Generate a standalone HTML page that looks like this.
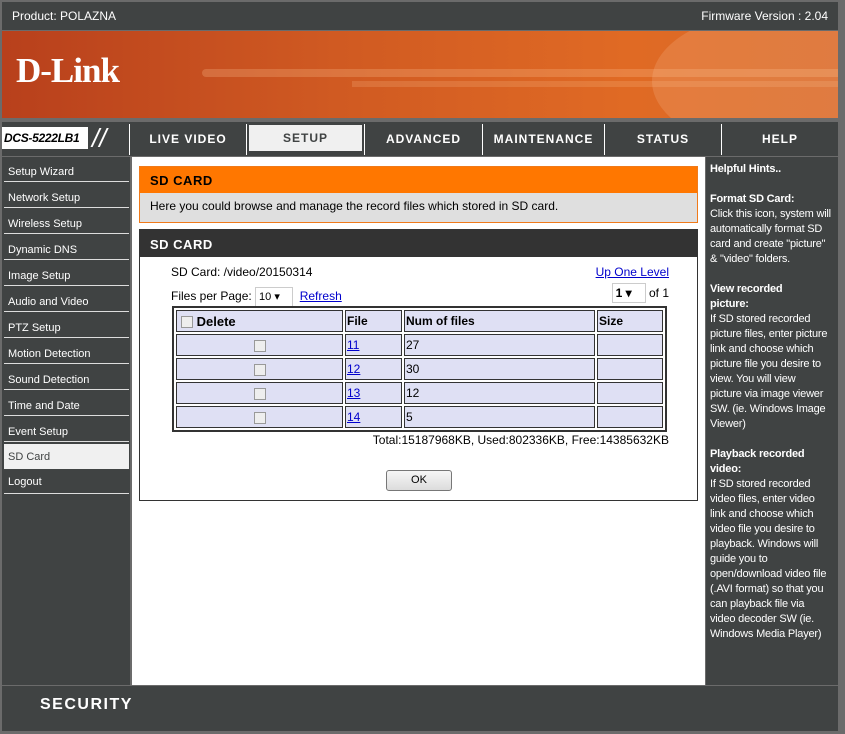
<!DOCTYPE html>
<html><head><meta charset="utf-8"><style>
*{margin:0;padding:0;box-sizing:border-box}
body{width:845px;height:734px;background:#6b6b6b;position:relative;overflow:hidden;font-family:"Liberation Sans",sans-serif;font-size:12px;color:#000}
.a{position:absolute}
.top{left:2px;top:2px;width:836px;height:28px;background:#404343;color:#fff;font-size:12px}
.banner{left:2px;top:31px;width:836px;height:87px;background:linear-gradient(90deg,#b8401c 0%,#d05a22 40%,#e06a24 75%,#d8682a 100%);overflow:hidden}
.nav{left:2px;top:122px;width:836px;height:34px;background:#404343}
.nav div.it{position:absolute;top:2px;height:31px;border-left:1px solid #fff;color:#fff;font-weight:bold;font-size:12px;letter-spacing:1px;text-align:center;line-height:31px}
.side{left:2px;top:157px;width:128px;height:528px;background:#404343}
.side div{position:absolute;left:2px;width:125px;height:25px;border-bottom:1px solid #ddd;color:#fff;font-size:11px;padding-left:4px;line-height:30px}
.main{left:132px;top:157px;width:573px;height:528px;background:#fff}
.hint{left:706px;top:157px;width:132px;height:528px;background:#404343;color:#fff;font-size:11px;line-height:15px;padding:5px 0 0 4px;letter-spacing:-0.2px;white-space:nowrap;overflow:hidden}
.foot{left:2px;top:686px;width:836px;height:45px;background:#404343}
table{border-collapse:separate;border-spacing:2px;background:#fff;border:2px solid #333}
td{background:#dfe0f4;border:1px solid #333;height:22px;font-size:12px;padding-left:1px}
a{color:#00c;text-decoration:underline}
.cb{display:inline-block;width:12px;height:12px;border:1px solid #999;background:#eee;vertical-align:middle}
.sel{display:inline-block;border:1px solid #ccc;height:20px;line-height:18px;padding:0 3px;font-size:11px;background:#fff}
</style></head><body>
<div class="a top"><span class="a" style="left:10px;top:7px">Product: POLAZNA</span><span class="a" style="right:10px;top:7px">Firmware Version : 2.04</span></div>
<div class="a banner">
<div class="a" style="left:200px;top:38px;width:700px;height:8px;background:rgba(255,200,150,.25);border-radius:4px"></div>
<div class="a" style="left:350px;top:50px;width:600px;height:6px;background:rgba(255,200,150,.2)"></div>
<div class="a" style="left:650px;top:-20px;width:250px;height:140px;border-radius:50%;background:rgba(255,210,170,.18)"></div>
<span class="a" style="left:14px;top:20px;color:#fff;font-family:'Liberation Serif',serif;font-weight:bold;font-size:35px;letter-spacing:-1px">D-Link</span></div>
<div class="a nav">
<div class="a" style="left:0;top:5px;width:86px;height:22px;background:#fff;color:#000;font-style:italic;font-weight:bold;font-size:12px;line-height:22px;padding-left:2px;white-space:nowrap;overflow:hidden;letter-spacing:-0.3px">DCS-5222LB1</div>
<span class="a" style="left:90px;top:1px;color:#fff;font-size:26px;font-style:italic">//</span>
<div class="it" style="left:127px;width:117px">LIVE VIDEO</div>
<div class="it" style="left:244px;width:118px"><div style="margin:1px 2px;background:#f0f0f0;color:#404343;height:26px;line-height:26px">SETUP</div></div>
<div class="it" style="left:362px;width:118px">ADVANCED</div>
<div class="it" style="left:480px;width:122px">MAINTENANCE</div>
<div class="it" style="left:602px;width:117px">STATUS</div>
<div class="it" style="left:719px;width:117px">HELP</div>
</div>
<div class="a side">
<div style="top:0">Setup Wizard</div><div style="top:26px">Network Setup</div><div style="top:52px">Wireless Setup</div><div style="top:78px">Dynamic DNS</div><div style="top:104px">Image Setup</div><div style="top:130px">Audio and Video</div><div style="top:156px">PTZ Setup</div><div style="top:182px">Motion Detection</div><div style="top:208px">Sound Detection</div><div style="top:234px">Time and Date</div><div style="top:260px">Event Setup</div><div style="top:287px;background:#f0f0f0;color:#404343;border:none;height:25px;line-height:27px">SD Card</div><div style="top:312px;line-height:27px">Logout</div>
</div>
<div class="a main">
<div class="a" style="left:7px;top:9px;width:559px;height:57px;border:1px solid #f07a1a">
<div style="background:#ff7700;height:26px;color:#000;font-weight:bold;font-size:13px;padding:6px 10px;letter-spacing:.5px">SD CARD</div>
<div style="background:#dfdfdf;height:29px;padding:6px 10px">Here you could browse and manage the record files which stored in SD card.</div></div>
<div class="a" style="left:7px;top:72px;width:559px;height:272px;border:1px solid #333">
<div style="background:#333;height:27px;color:#fff;font-weight:bold;font-size:13px;padding:7px 10px;letter-spacing:.5px">SD CARD</div>
<span class="a" style="left:31px;top:35px">SD Card: /video/20150314</span>
<a class="a" style="right:28px;top:35px">Up One Level</a>
<span class="a" style="left:31px;top:57px">Files per Page: <span class="sel" style="width:38px">10 &#9662;</span> &nbsp;<a>Refresh</a></span>
<span class="a" style="right:28px;top:53px"><span class="sel" style="width:34px;font-weight:bold;font-size:12px">1 &#9662;</span> of 1</span>
<table class="a" style="left:32px;top:76px;width:495px">
<tr><td style="width:167px;font-weight:bold;font-size:13px;padding-left:4px"><span class="cb"></span> Delete</td><td style="width:57px;font-weight:bold">File</td><td style="width:191px;font-weight:bold">Num of files</td><td style="font-weight:bold">Size</td></tr>
<tr><td style="text-align:center"><span class="cb"></span></td><td><a>11</a></td><td>27</td><td></td></tr>
<tr><td style="text-align:center"><span class="cb"></span></td><td><a>12</a></td><td>30</td><td></td></tr>
<tr><td style="text-align:center"><span class="cb"></span></td><td><a>13</a></td><td>12</td><td></td></tr>
<tr><td style="text-align:center"><span class="cb"></span></td><td><a>14</a></td><td>5</td><td></td></tr>
</table>
<span class="a" style="right:28px;top:203px">Total:15187968KB, Used:802336KB, Free:14385632KB</span>
<div class="a" style="left:246px;top:240px;width:66px;height:21px;border:1px solid #777;border-radius:3px;background:linear-gradient(#f6f6f6,#dcdcdc);text-align:center;line-height:19px;font-size:11px">OK</div>
</div>
</div>
<div class="a hint"><b>Helpful Hints..</b><br><br><b>Format SD Card:</b><br>Click this icon, system will<br>automatically format SD<br>card and create "picture"<br>&amp; "video" folders.<br><br><b>View recorded<br>picture:</b><br>If SD stored recorded<br>picture files, enter picture<br>link and choose which<br>picture file you desire to<br>view. You will view<br>picture via image viewer<br>SW. (ie. Windows Image<br>Viewer)<br><br><b>Playback recorded<br>video:</b><br>If SD stored recorded<br>video files, enter video<br>link and choose which<br>video file you desire to<br>playback. Windows will<br>guide you to<br>open/download video file<br>(.AVI format) so that you<br>can playback file via<br>video decoder SW (ie.<br>Windows Media Player)</div>
<div class="a foot"><span class="a" style="left:38px;top:10px;color:#fff;font-weight:bold;font-size:16px;letter-spacing:1.5px">SECURITY</span></div>
</body></html>
